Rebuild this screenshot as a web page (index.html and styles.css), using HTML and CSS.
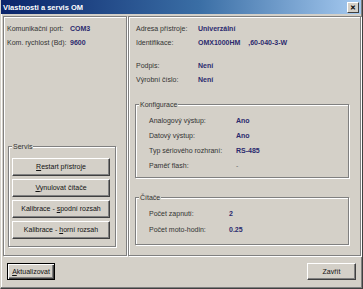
FILE: index.html
```html
<!DOCTYPE html>
<html lang="cs">
<head>
    <meta charset="UTF-8">
    <title>Vlastnosti a servis OM</title>
    <link rel="stylesheet" href="styles.css">
</head>
<body>

    <div class="window">
        <!-- Titulkový pruh -->
        <div class="titlebar">
            <span class="title">Vlastnosti a servis OM</span>
            <span class="close">&#x2715;</span>
        </div>

        <div class="content">
            <div class="panels">
                <!-- Levý panel -->
                <div class="panel panel-left">
                    <div class="row"><span class="label w63">Komunikační port:</span><span class="value">COM3</span></div>
                    <div class="row"><span class="label w63">Kom. rychlost (Bd):</span><span class="value">9600</span></div>

                    <div class="group servis">
                        <span class="legend">Servis</span>
                        <button class="btn"><u>R</u>estart přístroje</button>
                        <button class="btn"><u>V</u>ynulovat čítače</button>
                        <button class="btn">Kalibrace - <u>s</u>podní rozsah</button>
                        <button class="btn">Kalibrace - <u>h</u>orní rozsah</button>
                    </div>
                </div>

                <!-- Pravý panel -->
                <div class="panel panel-right">
                    <div class="row"><span class="label w62">Adresa přístroje:</span><span class="value">Univerzální</span></div>
                    <div class="row"><span class="label w62">Identifikace:</span><span class="value pre">OMX1000HM    ,60-040-3-W</span></div>
                    <div class="row gap-top"><span class="label w62">Podpis:</span><span class="value">Není</span></div>
                    <div class="row"><span class="label w62">Výrobní číslo:</span><span class="value">Není</span></div>

                    <div class="group konfigurace">
                        <span class="legend">Konfigurace</span>
                        <div class="row r15"><span class="label w87">Analogový výstup:</span><span class="value">Ano</span></div>
                        <div class="row r15"><span class="label w87">Datový výstup:</span><span class="value">Ano</span></div>
                        <div class="row r15"><span class="label w87">Typ sériového rozhraní:</span><span class="value">RS-485</span></div>
                        <div class="row r15"><span class="label w87">Paměť flash:</span><span class="value plain">-</span></div>
                    </div>

                    <div class="group citace">
                        <span class="legend">Čítače</span>
                        <div class="row r16"><span class="label w80">Počet zapnutí:</span><span class="value">2</span></div>
                        <div class="row r16"><span class="label w80">Počet moto-hodin:</span><span class="value">0.25</span></div>
                    </div>
                </div>
            </div>

            <!-- Spodní tlačítka -->
            <div class="footer">
                <button class="btn btn-default"><u>A</u>ktualizovat</button>
                <button class="btn btn-close">Zavřít</button>
            </div>
        </div>
    </div>

</body>
</html>
```

FILE: styles.css
```css
/* Celkové nastavení stránky */
body {
    margin: 0;
    padding: 0;
    background-color: #d4d0c8;
    font-family: "Liberation Sans", Arial, sans-serif;
    font-size: 7px;
    color: #333;
}

/* Okno */
.window {
    width: 363px;
    height: 289px;
    box-sizing: border-box;
    background-color: #d4d0c8;
    border-style: solid;
    border-width: 0 1px 1px 1px;
    border-color: #d4d0c8 #404040 #404040 #d4d0c8;
    box-shadow: inset -1px -1px #808080, inset 1px 0 #fff;
    display: flex;
    flex-direction: column;
}

.titlebar {
    height: 14px;
    margin-right: 1px;
    background: linear-gradient(to right, #0a246a, #3a6ea5 55%, #a6caf0);
    display: flex;
    align-items: center;
    justify-content: space-between;
    padding: 0 2px 0 2px;
}

.title {
    color: #fff;
    font-weight: bold;
    font-size: 7.5px;
}

.close {
    width: 10px;
    height: 9px;
    background-color: #d4d0c8;
    border: 1px solid;
    border-color: #fff #404040 #404040 #fff;
    font-size: 7px;
    font-weight: bold;
    line-height: 9px;
    text-align: center;
    color: #000;
}

.content {
    flex: 1;
    display: flex;
    flex-direction: column;
    padding: 2px 1px 0 2px;
}

/* Panely */
.panels {
    display: flex;
    gap: 1px;
    height: 240px;
}

.panel {
    border: 1px solid #808080;
    box-shadow: inset 1px 1px #fff, 1px 1px #fff;
    display: flex;
    flex-direction: column;
    padding-top: 5px;
}

.panel-left {
    width: 122px;
}

.panel-right {
    flex: 1;
}

.row {
    display: flex;
    height: 14px;
    line-height: 14px;
    padding-left: 3px;
    white-space: nowrap;
}

.panel-right > .row {
    padding-left: 7px;
}

.row.gap-top {
    margin-top: 9px;
}

.row.r15 {
    height: 15px;
    line-height: 15px;
}

.row.r16 {
    height: 16px;
    line-height: 16px;
}

.label {
    flex-shrink: 0;
}

.w62 { width: 62px; }
.w63 { width: 63px; }
.w80 { width: 80px; }
.w87 { width: 87px; }

.value {
    font-weight: bold;
    color: #2b2a6e;
}

.value.pre {
    white-space: pre;
}

.value.plain {
    font-weight: normal;
    color: #666;
}

/* Skupiny */
.group {
    position: relative;
    border: 1px solid #808080;
    box-shadow: inset 1px 1px #fff, 1px 1px #fff;
    display: flex;
    flex-direction: column;
}

.legend {
    position: absolute;
    top: -5px;
    left: 3px;
    padding: 0 1px;
    line-height: 9px;
    background-color: #d4d0c8;
}

.servis {
    margin: auto 10px 8px 4px;
    padding: 11px 0 7px 3px;
    gap: 3px;
}

.konfigurace {
    margin: 17px 11px 0 6px;
    padding: 8px 0 4px 10px;
}

.citace {
    margin: 19px 11px 0 6px;
    padding: 8px 0 6px 10px;
}

/* Tlačítka */
.btn {
    font-family: "Liberation Sans", Arial, sans-serif;
    font-size: 7px;
    color: #111;
    background-color: #d4d0c8;
    border: 1px solid;
    border-color: #fff #404040 #404040 #fff;
    box-shadow: inset -1px -1px #808080;
    padding: 0;
    margin: 0;
    height: 18px;
    line-height: 16px;
    text-align: center;
    cursor: pointer;
}

.servis .btn {
    width: 98px;
}

.footer {
    display: flex;
    justify-content: space-between;
    margin-top: 7px;
    padding: 0 5px 0 4px;
}

.btn-default {
    width: 48px;
    height: 17px;
    border: 1px solid #000;
    box-shadow: inset 1px 1px #fff, inset -1px -1px #404040, inset -2px -2px #808080;
}

.btn-close {
    width: 49px;
    height: 17px;
}
```
